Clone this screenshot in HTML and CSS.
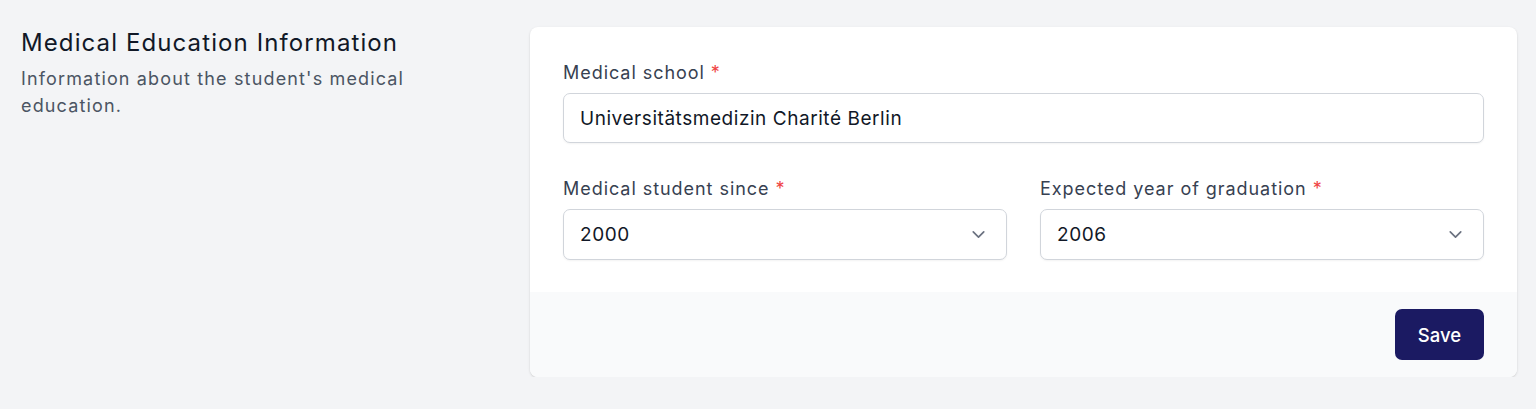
FILE: index.html
```html
<!DOCTYPE html>
<html lang="en">
<head>
<meta charset="utf-8">
<title>Medical Education Information</title>
<link rel="stylesheet" href="styles.css">
</head>
<body>
<div class="page">
  <div class="intro">
    <h2 class="title">Medical Education Information</h2>
    <p class="desc">Information about the student's medical education.</p>
  </div>
  <form class="card">
    <div class="card-body">
      <div class="field full">
        <label class="label" for="school">Medical school <span class="req">*</span></label>
        <input class="input" id="school" type="text" value="Universitätsmedizin Charité Berlin">
      </div>
      <div class="field">
        <label class="label" for="since">Medical student since <span class="req">*</span></label>
        <div class="select">
          <span class="select-value">2000</span>
          <svg class="chev" viewBox="0 0 20 20" width="20" height="20"><path d="M5 7.5l5 5 5-5" fill="none" stroke="currentColor" stroke-width="1.6" stroke-linecap="round" stroke-linejoin="round"/></svg>
        </div>
      </div>
      <div class="field">
        <label class="label" for="grad">Expected year of graduation <span class="req">*</span></label>
        <div class="select">
          <span class="select-value">2006</span>
          <svg class="chev" viewBox="0 0 20 20" width="20" height="20"><path d="M5 7.5l5 5 5-5" fill="none" stroke="currentColor" stroke-width="1.6" stroke-linecap="round" stroke-linejoin="round"/></svg>
        </div>
      </div>
    </div>
    <div class="card-footer">
      <button class="btn" type="button">Save</button>
    </div>
  </form>
</div>
</body>
</html>
```
FILE: styles.css
```css
* { box-sizing: border-box; }
html, body { margin: 0; padding: 0; }
body {
  background: #f3f4f6;
  font-family: Inter, "Noto Sans", sans-serif;
  color: #111827;
}
.page {
  display: grid;
  grid-template-columns: 509px 987px;
  padding: 27px 19px 0 21px;
}
.intro { padding-top: 2px; }
.title {
  margin: 0;
  font-size: 24px;
  font-weight: 400;
  letter-spacing: 1.1px;
  line-height: 28px;
  color: #111827;
}
.desc {
  margin: 8px 0 0;
  font-size: 18px;
  letter-spacing: 1.15px;
  line-height: 27px;
  color: #4b5563;
  max-width: 420px;
}
.card {
  background: #fff;
  border-radius: 8px;
  box-shadow: 0 1px 3px rgba(0,0,0,0.10), 0 1px 2px rgba(0,0,0,0.06);
  overflow: hidden;
  margin: 0;
}
.card-body {
  display: grid;
  grid-template-columns: 1fr 1fr;
  column-gap: 33px;
  row-gap: 33px;
  padding: 33px 33px 32px;
}
.field { display: flex; flex-direction: column; gap: 8px; }
.full { grid-column: 1 / -1; }
.label {
  font-size: 18px;
  letter-spacing: 0.95px;
  line-height: 25px;
  color: #374151;
}
.req { color: #ef4444; letter-spacing: 0; }
.input, .select {
  height: 50px;
  border: 1px solid #d1d5db;
  border-radius: 7px;
  box-shadow: 0 1px 2px rgba(0,0,0,0.05);
  background: #fff;
  font-family: inherit;
  font-size: 19px;
  letter-spacing: 0.55px;
  color: #111827;
  padding: 0 16px;
  width: 100%;
}
.select {
  height: 51px;
  display: flex;
  align-items: center;
  justify-content: space-between;
  padding-right: 17px;
}
.chev { color: #6b7280; width: 21px; height: 21px; }
.card-footer {
  background: #f9fafb;
  display: flex;
  justify-content: flex-end;
  padding: 17px 33px;
}
.btn {
  width: 89px;
  height: 51px;
  border: 0;
  border-radius: 7px;
  background: #1b1a62;
  color: #fff;
  font-family: inherit;
  font-size: 18.5px;
  font-weight: 500;
}
```
